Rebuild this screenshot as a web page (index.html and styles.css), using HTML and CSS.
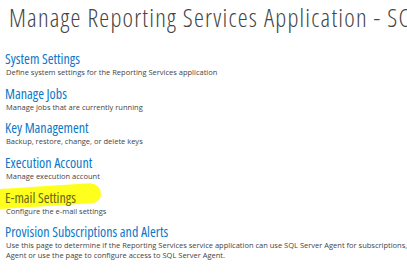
FILE: index.html
```html
<!DOCTYPE html>
<html lang="en">
<head>
  <meta charset="UTF-8">
  <title>Manage Reporting Services Application</title>
  <link rel="stylesheet" href="styles.css">
</head>
<body>
  <div class="page">
    <h1 class="page-title">Manage Reporting Services Application - SC</h1>

    <ul class="settings-list">
      <li class="setting">
        <a class="setting-link" href="#">System Settings</a>
        <p class="setting-desc">Define system settings for the Reporting Services application</p>
      </li>
      <li class="setting">
        <a class="setting-link" href="#">Manage Jobs</a>
        <p class="setting-desc">Manage jobs that are currently running</p>
      </li>
      <li class="setting">
        <a class="setting-link" href="#">Key Management</a>
        <p class="setting-desc">Backup, restore, change, or delete keys</p>
      </li>
      <li class="setting">
        <a class="setting-link" href="#">Execution Account</a>
        <p class="setting-desc">Manage execution account</p>
      </li>
      <li class="setting">
        <span class="marker"></span>
        <a class="setting-link marked" href="#">E-mail Settings</a>
        <p class="setting-desc">Configure the e-mail settings</p>
      </li>
      <li class="setting">
        <a class="setting-link" href="#">Provision Subscriptions and Alerts</a>
        <p class="setting-desc">
          <span class="desc-line">Use this page to determine if the Reporting Services service application can use SQL Server Agent for subscriptions,</span>
          <span class="desc-line">Agent or use the page to configure access to SQL Server Agent.</span>
        </p>
      </li>
    </ul>
  </div>
</body>
</html>
```

FILE: styles.css
```css
/* General */
body {
  margin: 0;
  background: #fff;
  color: #444;
  font-family: 'Open Sans', 'Liberation Sans', sans-serif;
  overflow: hidden;
}

.page {
  padding: 0 0 0 5px;
}

.page-title {
  margin: 0;
  padding: 0 0 0 4px;
  font-size: 25px;
  font-weight: 300;
  font-stretch: condensed;
  letter-spacing: 1.2px;
  line-height: 34px;
  color: #444;
  white-space: nowrap;
}

/* Settings list */
.settings-list {
  list-style: none;
  margin: 17px 0 0;
  padding: 0;
}

.setting {
  position: relative;
  margin-bottom: 8.7px;
}

.setting-link {
  position: relative;
  display: block;
  width: max-content;
  font-size: 14px;
  font-stretch: condensed;
  line-height: 16px;
  color: #0a78c8;
  text-decoration: none;
}

.setting-link.marked {
  color: #66661a;
}

.setting-desc {
  position: relative;
  margin: 0;
  padding-left: 1px;
  font-size: 7.5px;
  line-height: 10px;
  color: #444;
  white-space: nowrap;
}

.desc-line {
  display: block;
}

/* Yellow highlighter stroke */
.marker {
  position: absolute;
  left: -12px;
  top: -4px;
  width: 108px;
  height: 20px;
  background: #ffff1e;
  border-radius: 6px 12px 10px 4px;
  transform: rotate(-3.6deg);
}
```
